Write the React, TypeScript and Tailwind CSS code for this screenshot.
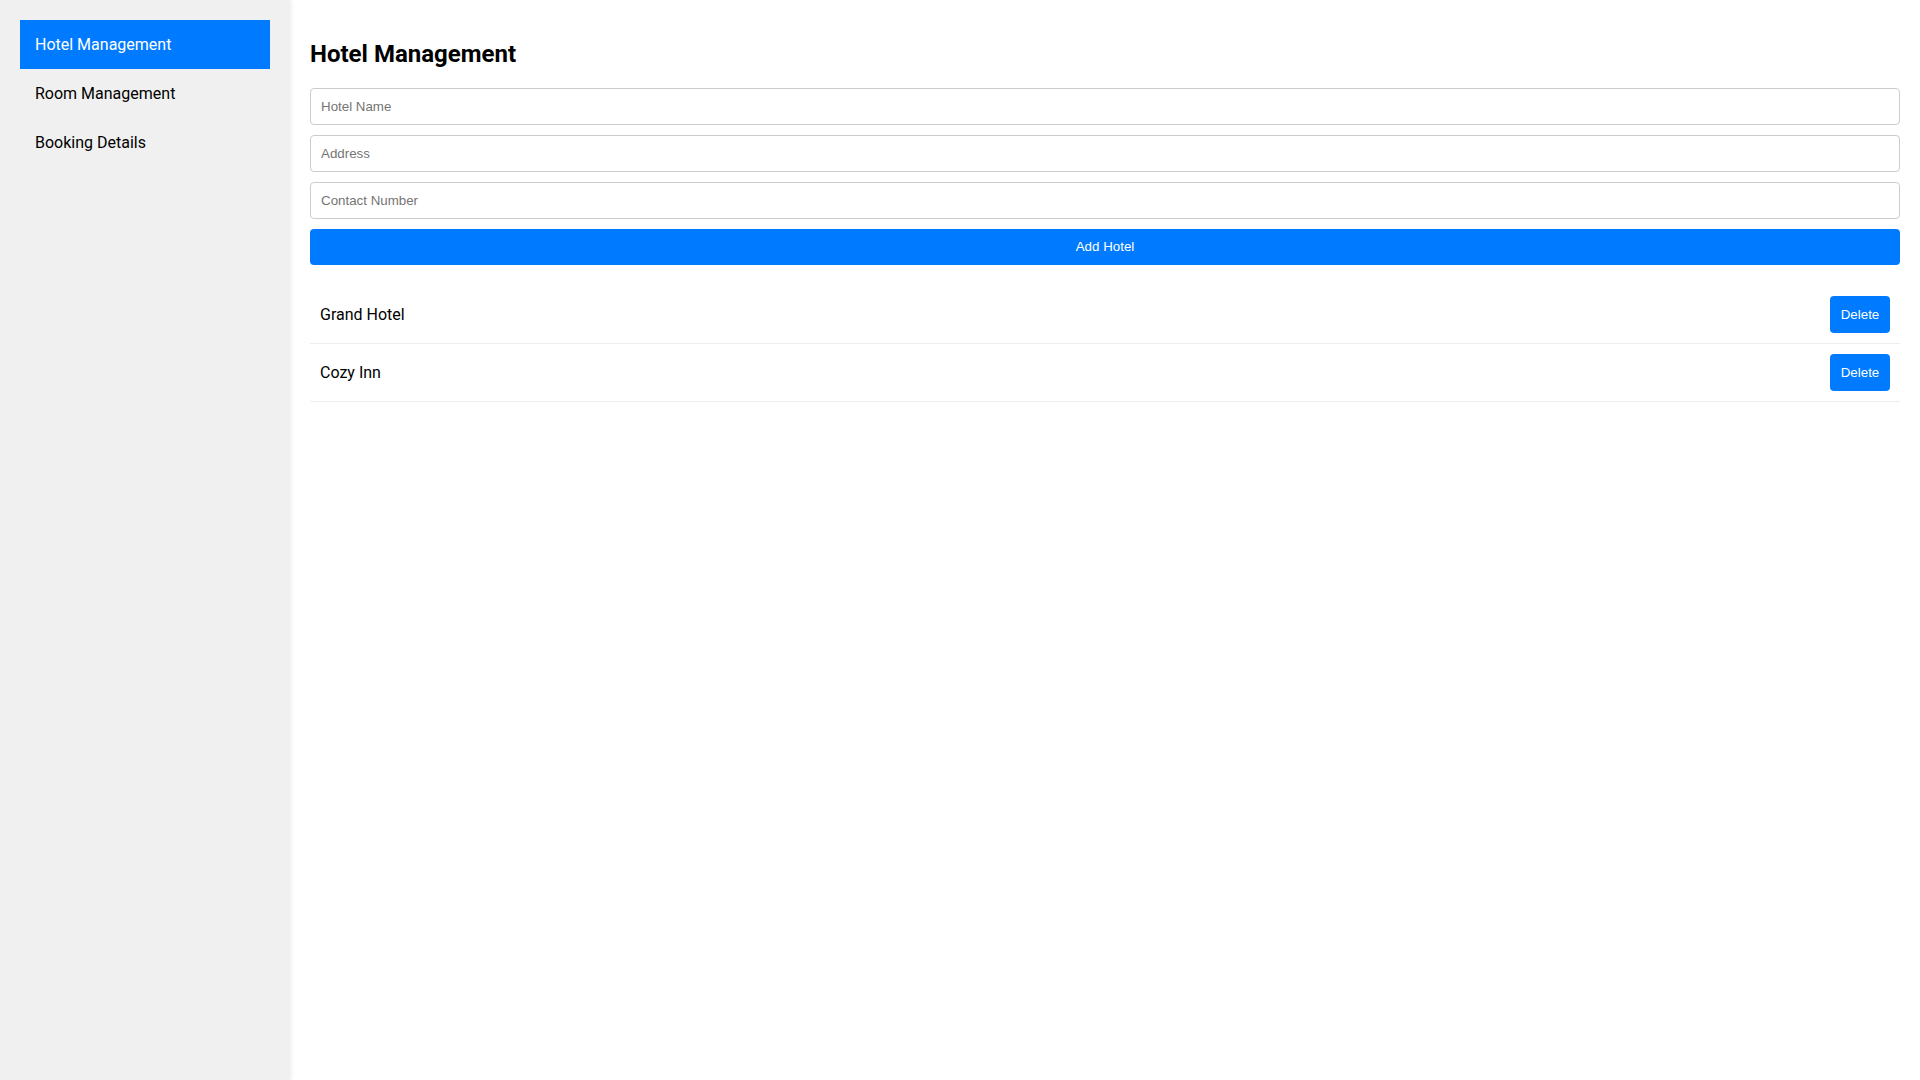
import { useState } from 'react';

type Hotel = { id: number; name: string };

const navItems = ['Hotel Management', 'Room Management', 'Booking Details'];

export default function App() {
    const [active, setActive] = useState('Hotel Management');
    const [hotels, setHotels] = useState<Hotel[]>([
        { id: 1, name: 'Grand Hotel' },
        { id: 2, name: 'Cozy Inn' },
    ]);
    const [name, setName] = useState('');
    const [address, setAddress] = useState('');
    const [contact, setContact] = useState('');

    const addHotel = () => {
        if (!name.trim()) return;
        setHotels(prev => [...prev, { id: Date.now(), name: name.trim() }]);
        setName('');
        setAddress('');
        setContact('');
    };

    const inputClass =
        "w-full mb-[10px] p-[10px] border border-[#ccc] rounded-[4px] bg-white text-[13.33px] leading-[15px] text-black placeholder:text-[#757575] outline-none font-['Liberation_Sans',Arial,sans-serif]";

    return (
        <div className="flex h-screen font-['Roboto',sans-serif] text-black">
            {/* Sidebar */}
            <aside className="w-[290px] shrink-0 bg-[#f0f0f0] p-[20px] shadow-[2px_0_4px_rgba(0,0,0,0.06)] z-10">
                <ul>
                    {navItems.map(item => (
                        <li
                            key={item}
                            onClick={() => setActive(item)}
                            className={`px-[15px] py-[15px] text-[16px] leading-[19px] cursor-pointer ${
                                active === item ? 'bg-[#007bff] text-white' : 'text-black'
                            }`}
                        >
                            {item}
                        </li>
                    ))}
                </ul>
            </aside>

            {/* Main */}
            <main className="flex-1 p-[20px] bg-white">
                <h2 className="mt-[20px] mb-[20px] text-[24px] leading-[28px] font-bold">{active}</h2>

                <input className={inputClass} placeholder="Hotel Name" value={name} onChange={e => setName(e.target.value)} />
                <input className={inputClass} placeholder="Address" value={address} onChange={e => setAddress(e.target.value)} />
                <input className={inputClass} placeholder="Contact Number" value={contact} onChange={e => setContact(e.target.value)} />
                <button
                    onClick={addHotel}
                    className="w-full h-[36px] bg-[#007bff] text-white rounded-[4px] text-[13.33px] font-['Liberation_Sans',Arial,sans-serif] cursor-pointer"
                >
                    Add Hotel
                </button>

                <ul className="mt-[21px]">
                    {hotels.map(h => (
                        <li key={h.id} className="flex items-center justify-between p-[10px] border-b border-[#eee]">
                            <span className="text-[16px]">{h.name}</span>
                            <button
                                onClick={() => setHotels(prev => prev.filter(x => x.id !== h.id))}
                                className="w-[60px] h-[37px] bg-[#007bff] text-white rounded-[4px] text-[13.33px] font-['Liberation_Sans',Arial,sans-serif] cursor-pointer"
                            >
                                Delete
                            </button>
                        </li>
                    ))}
                </ul>
            </main>
        </div>
    );
}
